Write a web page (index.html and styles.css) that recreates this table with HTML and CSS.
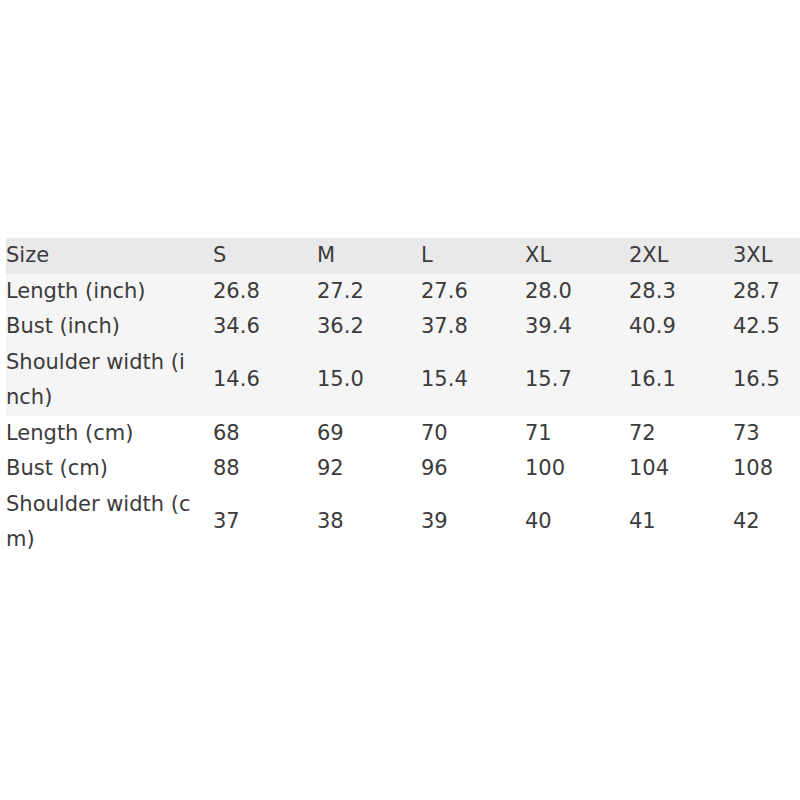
FILE: index.html
```html
<!DOCTYPE html>
<html>
<head>
<meta charset="utf-8">
<link rel="stylesheet" href="styles.css">
</head>
<body>
<div class="page">
<table class="size-table">
  <colgroup>
    <col class="c-label"><col class="c-val"><col class="c-val"><col class="c-val"><col class="c-val"><col class="c-val"><col class="c-last">
  </colgroup>
  <tbody>
    <tr class="head"><td class="label">Size</td><td>S</td><td>M</td><td>L</td><td>XL</td><td>2XL</td><td>3XL</td></tr>
    <tr class="alt"><td class="label">Length (inch)</td><td>26.8</td><td>27.2</td><td>27.6</td><td>28.0</td><td>28.3</td><td>28.7</td></tr>
    <tr class="alt"><td class="label">Bust (inch)</td><td>34.6</td><td>36.2</td><td>37.8</td><td>39.4</td><td>40.9</td><td>42.5</td></tr>
    <tr class="alt"><td class="label">Shoulder width (inch)</td><td>14.6</td><td>15.0</td><td>15.4</td><td>15.7</td><td>16.1</td><td>16.5</td></tr>
    <tr><td class="label">Length (cm)</td><td>68</td><td>69</td><td>70</td><td>71</td><td>72</td><td>73</td></tr>
    <tr><td class="label">Bust (cm)</td><td>88</td><td>92</td><td>96</td><td>100</td><td>104</td><td>108</td></tr>
    <tr><td class="label">Shoulder width (cm)</td><td>37</td><td>38</td><td>39</td><td>40</td><td>41</td><td>42</td></tr>
  </tbody>
</table>
</div>
</body>
</html>
```

FILE: styles.css
```css
html, body {
  margin: 0;
  padding: 0;
  background: #ffffff;
}

.page {
  padding: 238px 0 0 6px;
}

.size-table {
  border-collapse: collapse;
  table-layout: fixed;
  width: 794px;
  font-family: "DejaVu Sans", "Liberation Sans", sans-serif;
  font-size: 21px;
  color: #3b3b3b;
}

.c-label { width: 207px; }
.c-val { width: 104px; }

.size-table td {
  padding: 0;
  line-height: 35.5px;
  vertical-align: middle;
  text-align: left;
  white-space: normal;
}

.size-table td.label {
  padding-right: 15px;
  word-break: break-all;
}

.head td { background: #e9e9e9; }
.alt td { background: #f5f5f5; }
```
